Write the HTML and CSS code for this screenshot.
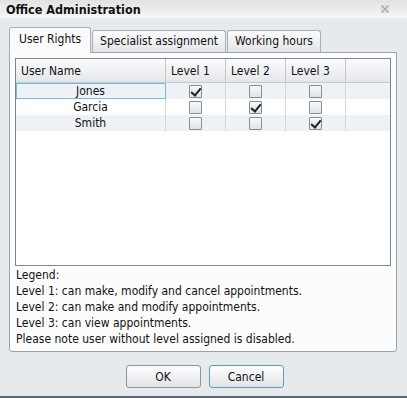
FILE: index.html
```html
<!DOCTYPE html>
<html lang="en">
<head>
    <meta charset="UTF-8">
    <title>Office Administration</title>
    <link rel="stylesheet" href="styles.css">
</head>
<body>
    <div class="dialog">
        <div class="titlebar">
            <span class="title">Office Administration</span>
            <svg class="close" width="8" height="8" viewBox="0 0 8 8">
                <path d="M0.5 0.5 L7.5 7.5 M7.5 0.5 L0.5 7.5" stroke="#a0a0a0" stroke-width="1.2" fill="none"/>
                <rect x="0.5" y="0.5" width="7" height="7" fill="none" stroke="#c8c8c8" stroke-width="0.6"/>
            </svg>
        </div>

        <div class="tabs">
            <div class="tab active">User Rights</div>
            <div class="tab">Specialist assignment</div>
            <div class="tab">Working hours</div>
        </div>

        <div class="panel">
            <div class="grid">
                <table>
                    <thead>
                        <tr>
                            <th class="col-name">User Name</th>
                            <th class="col-level">Level 1</th>
                            <th class="col-level">Level 2</th>
                            <th class="col-level">Level 3</th>
                            <th></th>
                        </tr>
                    </thead>
                    <tbody>
                        <tr class="alt">
                            <td class="name selected">Jones</td>
                            <td><span class="check on"></span></td>
                            <td><span class="check"></span></td>
                            <td><span class="check"></span></td>
                            <td></td>
                        </tr>
                        <tr>
                            <td class="name">Garcia</td>
                            <td><span class="check"></span></td>
                            <td><span class="check on"></span></td>
                            <td><span class="check"></span></td>
                            <td></td>
                        </tr>
                        <tr class="alt">
                            <td class="name">Smith</td>
                            <td><span class="check"></span></td>
                            <td><span class="check"></span></td>
                            <td><span class="check on"></span></td>
                            <td></td>
                        </tr>
                    </tbody>
                </table>
            </div>

            <div class="legend">
                <div>Legend:</div>
                <div>Level 1: can make, modify and cancel appointments.</div>
                <div>Level 2: can make and modify appointments.</div>
                <div>Level 3: can view appointments.</div>
                <div>Please note user without level assigned is disabled.</div>
            </div>
        </div>

        <div class="buttons">
            <button>OK</button>
            <button class="focused">Cancel</button>
        </div>
    </div>
</body>
</html>
```

FILE: styles.css
```css
body { margin: 0; background: #e7eaed; font-family: "DejaVu Sans Condensed", "DejaVu Sans", sans-serif; font-size: 12px; color: #111; }
.dialog { width: 407px; height: 396px; border-bottom: 2px solid #5e6872; display: flex; flex-direction: column; }

.titlebar { height: 18px; display: flex; align-items: center; justify-content: space-between; padding: 0 18px 0 6px; background: linear-gradient(#e2e2e2, #f6f6f6); }
.title { font-weight: bold; font-size: 12.5px; color: #111; }
.close { display: block; }

.tabs { display: flex; align-items: flex-end; margin: 9px 0 0 9px; height: 25px; position: relative; z-index: 1; }
.tab { height: 21px; line-height: 21px; padding: 0 7px; border: 1px solid #a6aeb6; border-bottom: none; border-radius: 3px 3px 0 0; background: linear-gradient(#fbfbfb, #e3e6e9); margin-right: 1px; }
.tab.active { height: 25px; line-height: 23px; padding: 0 9px; background: #fbfbfb; margin-bottom: -1px; }

.panel { margin: 0 10px 0 9px; padding: 5px 5px 4px 5px; border: 1px solid #9aa3ad; border-radius: 0 0 3px 3px; background: #fcfcfc; }

.grid { height: 206px; border: 1px solid #7c8792; background: #fff; }
table { border-collapse: collapse; width: 100%; }
th { height: 23px; font-weight: normal; text-align: left; padding: 0 5px; background: linear-gradient(#fafbfc, #e4e7ea); border-right: 1px solid #c3c8ce; border-bottom: 1px solid #c3c8ce; }
th:last-child { border-right: none; }
.col-name { width: 139px; }
.col-level { width: 49px; }
td { height: 16px; padding: 0; text-align: center; border-right: 1px solid #d4d8dc; }
td:last-child { border-right: none; }
tr.alt td { background: #eef2f7; }
td.name { box-sizing: border-box; }
td.selected { outline: 1px solid #75bfcf; outline-offset: -1px; }

.check { display: inline-block; width: 11px; height: 11px; border: 1px solid #858e98; border-radius: 1px; background: linear-gradient(#f7f8f9, #dfe4ea); vertical-align: middle; position: relative; }
.check.on::after { content: ""; position: absolute; left: 3px; top: 0px; width: 4px; height: 8px; border-right: 2px solid #222; border-bottom: 2px solid #222; transform: rotate(40deg); }

.legend { padding: 1px 1px 0; }
.legend div { height: 16px; line-height: 16px; }

.buttons { display: flex; justify-content: center; gap: 8px; margin-top: 13px; padding-left: 2px; }
button { width: 75px; height: 23px; font-family: inherit; font-size: 12px; color: #111; border: 1px solid #8c949c; border-radius: 3px; background: linear-gradient(#fdfdfd, #e1e4e7); }
button.focused { border-color: #5f9fb5; }
```
